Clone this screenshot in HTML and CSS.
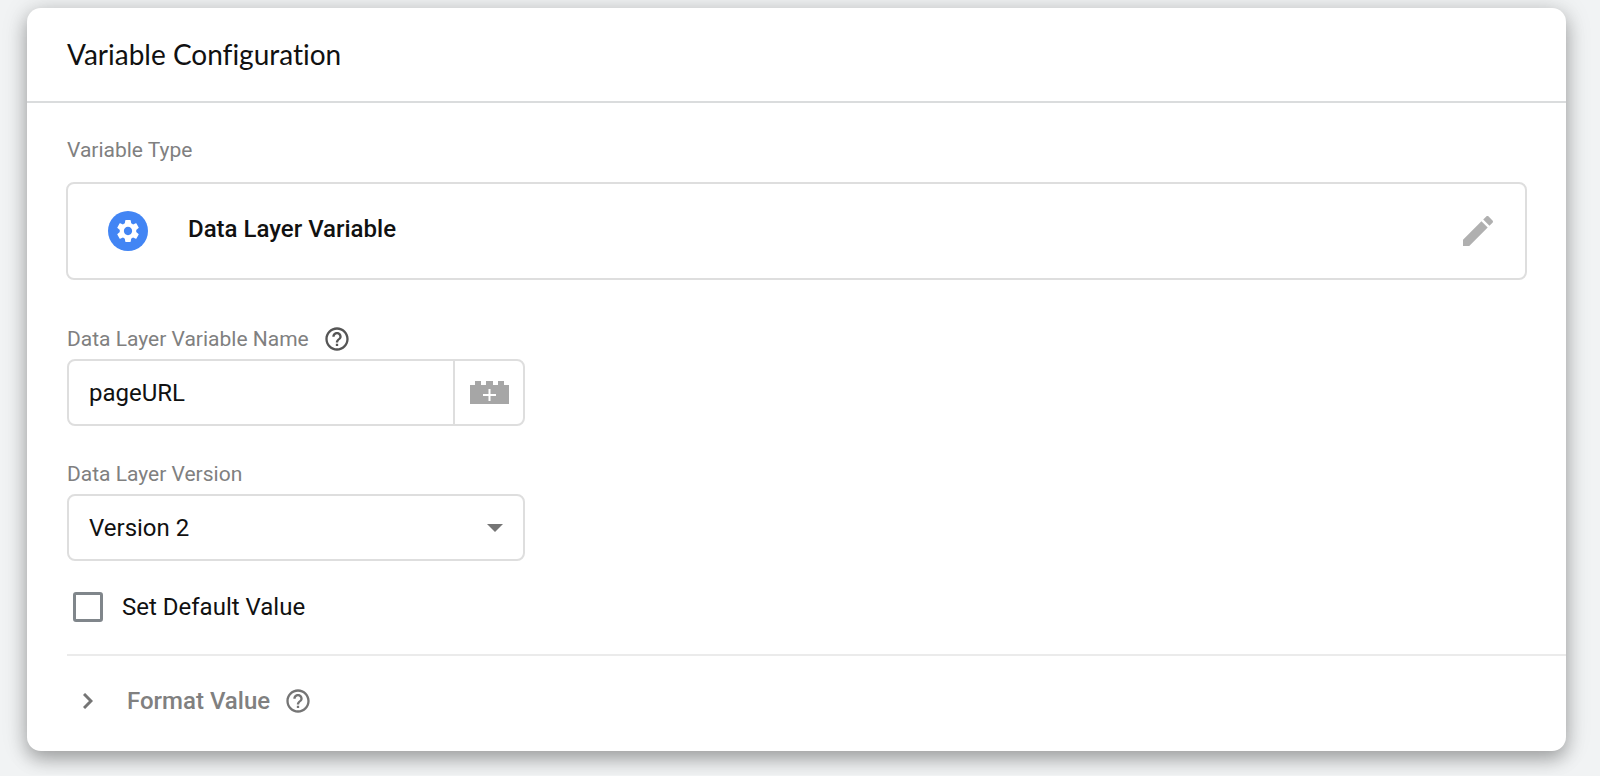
FILE: index.html
```html
<!DOCTYPE html>
<html lang="en">
<head>
    <meta charset="UTF-8">
    <meta name="viewport" content="width=device-width, initial-scale=1.0">
    <title>Variable Configuration</title>
    <link rel="stylesheet" href="styles.css">
</head>
<body>

<main class="card">
    <header class="card-header">
        <h1>Variable Configuration</h1>
    </header>

    <section class="type-section">
        <h2 class="label">Variable Type</h2>
        <div class="type-box">
            <svg class="type-icon" viewBox="0 0 40 40" aria-hidden="true">
                <circle cx="20" cy="20" r="20" fill="#4285f4"/>
                <g transform="translate(6.2 6.2) scale(1.15)">
                    <path fill="#fff" d="M19.14 12.94c.04-.3.06-.61.06-.94 0-.32-.02-.64-.07-.94l2.03-1.58c.18-.14.23-.41.12-.61l-1.92-3.32c-.12-.22-.37-.29-.59-.22l-2.39.96c-.5-.38-1.03-.7-1.62-.94l-.36-2.54c-.04-.24-.24-.41-.48-.41h-3.84c-.24 0-.43.17-.47.41l-.36 2.54c-.59.24-1.13.57-1.62.94l-2.39-.96c-.22-.08-.47 0-.59.22L2.74 8.87c-.12.21-.08.47.12.61l2.03 1.58c-.05.3-.09.63-.09.94s.02.64.07.94l-2.03 1.58c-.18.14-.23.41-.12.61l1.92 3.32c.12.22.37.29.59.22l2.39-.96c.5.38 1.03.7 1.62.94l.36 2.54c.05.24.24.41.48.41h3.84c.24 0 .44-.17.47-.41l.36-2.54c.59-.24 1.13-.56 1.62-.94l2.39.96c.22.08.47 0 .59-.22l1.92-3.32c.12-.22.07-.47-.12-.61l-2.01-1.58zM12 15.6c-1.98 0-3.6-1.62-3.6-3.6s1.62-3.6 3.6-3.6 3.6 1.62 3.6 3.6-1.62 3.6-3.6 3.6z"/>
                </g>
            </svg>
            <span class="type-name">Data Layer Variable</span>
            <button class="icon-button" type="button" aria-label="Edit variable type">
                <svg class="pencil" viewBox="0 0 24 24" aria-hidden="true">
                    <path d="M3 17.25V21h3.75L17.81 9.94l-3.75-3.75L3 17.25zM20.71 7.04c.39-.39.39-1.02 0-1.41l-2.34-2.34c-.39-.39-1.02-.39-1.41 0l-1.83 1.83 3.75 3.75 1.83-1.83z"/>
                </svg>
            </button>
        </div>
    </section>

    <section class="fields">
        <div class="field">
            <div class="label-row">
                <label class="label" for="variableName">Data Layer Variable Name</label>
                <button class="icon-button help dark" type="button" aria-label="Help: variable name">
                    <svg viewBox="0 0 24 24" aria-hidden="true">
                        <path d="M11 18h2v-2h-2v2zm1-16C6.48 2 2 6.48 2 12s4.48 10 10 10 10-4.48 10-10S17.52 2 12 2zm0 18c-4.41 0-8-3.59-8-8s3.59-8 8-8 8 3.59 8 8-3.59 8-8 8zm0-14c-2.21 0-4 1.79-4 4h2c0-1.1.9-2 2-2s2 .9 2 2c0 2-3 1.75-3 5h2c0-2.25 3-2.5 3-5 0-2.21-1.79-4-4-4z"/>
                    </svg>
                </button>
            </div>
            <div class="input-group">
                <input id="variableName" type="text" value="pageURL">
                <button class="brick-button" type="button" aria-label="Insert variable">
                    <svg viewBox="0 0 39 23" aria-hidden="true">
                        <path fill="#a6a6a6" d="M0 4h5V0h6v4h5V0h7v4h5V0h6v4h5v19H0z"/>
                        <path stroke="#fff" stroke-width="2" d="M19.5 8v12M13 14h13"/>
                    </svg>
                </button>
            </div>
        </div>

        <div class="field">
            <div class="label-row">
                <label class="label" for="dataVersion">Data Layer Version</label>
            </div>
            <div class="select-box">
                <select id="dataVersion">
                    <option>Version 1</option>
                    <option selected>Version 2</option>
                </select>
                <svg class="arrow" viewBox="0 0 16 8" aria-hidden="true"><path d="M0 0h16L8 8z"/></svg>
            </div>
        </div>

        <label class="check-row">
            <input type="checkbox">
            <span>Set Default Value</span>
        </label>
    </section>

    <section class="format-section">
        <button class="format-toggle" type="button" aria-expanded="false">
            <svg class="chevron" viewBox="0 0 10 16" aria-hidden="true"><path d="M1 1l7 7-7 7"/></svg>
            <span>Format Value</span>
        </button>
        <button class="icon-button help" type="button" aria-label="Help: format value">
            <svg viewBox="0 0 24 24" aria-hidden="true">
                <path d="M11 18h2v-2h-2v2zm1-16C6.48 2 2 6.48 2 12s4.48 10 10 10 10-4.48 10-10S17.52 2 12 2zm0 18c-4.41 0-8-3.59-8-8s3.59-8 8-8 8 3.59 8 8-3.59 8-8 8zm0-14c-2.21 0-4 1.79-4 4h2c0-1.1.9-2 2-2s2 .9 2 2c0 2-3 1.75-3 5h2c0-2.25 3-2.5 3-5 0-2.21-1.79-4-4-4z"/>
            </svg>
        </button>
    </section>
</main>

</body>
</html>
```
FILE: styles.css
```css
* {
    box-sizing: border-box;
}
body {
    margin: 0;
    padding: 8px 34px 24px 27px;
    background-color: #f1f3f4;
    font-family: Roboto, sans-serif;
    font-size: 24px;
    color: #111;
}
button, input, select {
    font: inherit;
    color: inherit;
}
button {
    padding: 0;
    border: none;
    background: none;
    cursor: pointer;
}
svg {
    display: block;
}
.card {
    background-color: #fff;
    border-radius: 14px;
    box-shadow: 0 8px 18px rgba(0,0,0,0.28), 0 2px 28px rgba(0,0,0,0.14);
}
.card-header {
    padding: 29px 40px 30px;
    border-bottom: 2px solid #dadcdd;
}
h1 {
    margin: 0;
    font-family: Lato, sans-serif;
    font-size: 28px;
    font-weight: 400;
    font-variant-ligatures: none;
    line-height: 34px;
}
.label {
    margin: 0;
    font-size: 21px;
    font-weight: 400;
    line-height: 28px;
    color: #808080;
}
.type-section {
    padding: 33px 39px 45px;
}
.type-section .label {
    padding: 0 1px;
}
.type-box {
    display: flex;
    align-items: center;
    margin-top: 18px;
    padding: 27px 27px 27px 40px;
    border: 2px solid #dedede;
    border-radius: 8px;
}
.type-icon {
    width: 40px;
    height: 40px;
}
.type-name {
    flex: 1;
    margin-left: 40px;
    padding-bottom: 4px;
    font-weight: 500;
    line-height: 28px;
}
.icon-button {
    fill: #757575;
}
.pencil {
    width: 40px;
    height: 40px;
    fill: #b0b0b0;
}
.help svg {
    width: 28px;
    height: 28px;
}
.dark {
    fill: #555;
}
.fields {
    padding: 0 40px 32px;
}
.field {
    max-width: 458px;
}
.field + .field {
    margin-top: 34px;
}
.label-row {
    display: flex;
    align-items: center;
    gap: 14px;
    margin-bottom: 6px;
}
.input-group, .select-box {
    display: flex;
    height: 67px;
    border: 2px solid #dedede;
    border-radius: 8px;
}
.input-group input {
    flex: 1;
    min-width: 0;
    padding: 0 20px;
    border: none;
    background: none;
}
.brick-button {
    display: flex;
    align-items: center;
    justify-content: center;
    width: 70px;
    border-left: 2px solid #dedede;
}
.brick-button svg {
    width: 39px;
    height: 23px;
}
.select-box {
    display: grid;
    align-items: center;
}
.select-box select, .arrow {
    grid-area: 1 / 1;
}
.select-box select {
    appearance: none;
    width: 100%;
    height: 100%;
    padding: 0 20px;
    border: none;
    background: none;
}
.arrow {
    justify-self: end;
    width: 16px;
    height: 8px;
    margin-right: 20px;
    fill: #757575;
    pointer-events: none;
}
.check-row {
    display: flex;
    align-items: center;
    gap: 19px;
    margin-top: 31px;
    padding-left: 6px;
}
.check-row input {
    appearance: none;
    width: 30px;
    height: 30px;
    margin: 0;
    border: 3px solid #80868b;
    border-radius: 3px;
}
.check-row input:checked {
    background-color: #4285f4;
}
.format-section {
    display: flex;
    align-items: center;
    gap: 14px;
    margin-left: 40px;
    padding: 31px 0 36px 16px;
    border-top: 2px solid #ebebeb;
}
.format-toggle {
    display: flex;
    align-items: center;
    gap: 34px;
    font-weight: 500;
    line-height: 28px;
    color: #808080;
}
.chevron {
    width: 10px;
    height: 16px;
    fill: none;
    stroke: #757575;
    stroke-width: 3;
}
```
